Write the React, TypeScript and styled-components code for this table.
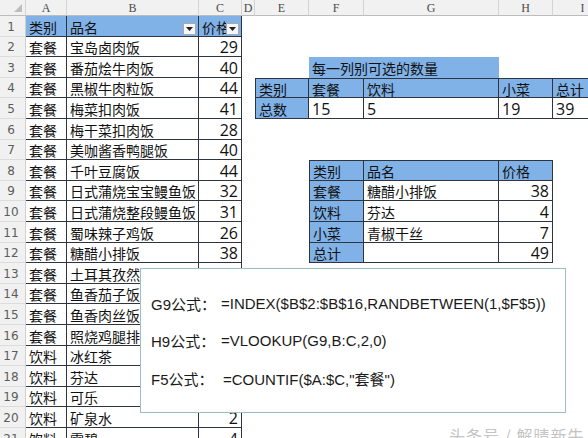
import React from 'react';
import styled, { createGlobalStyle, css } from 'styled-components';

const GlobalStyle = createGlobalStyle`
  * { box-sizing: border-box; }
  html, body { margin: 0; padding: 0; background: #ffffff; }
  body { width: 588px; height: 438px; overflow: hidden; }
`;

const COLS = [26, 41, 132, 43, 13, 54, 55, 135, 54, 60];
const PATTERN = [21, 20, 21, 20, 21];
const ROWS = [16, ...Array.from({ length: 21 }, (_, i) => PATTERN[i % 5])];
const LINE = '#2f3540';
const BLUE = '#80b2e8';

type CellSpec = {
  t?: string;
  fill?: 'blue' | 'white';
  num?: boolean;
  right?: boolean;
  top?: boolean;
  left?: boolean;
  span?: number;
  plain?: boolean;
  dd?: boolean;
};

const Frame = styled.div`
  position: relative;
  width: 588px;
  height: 438px;
  overflow: hidden;
  background: #ffffff;
  font-family: "Noto Sans CJK SC", sans-serif;
  color: #111;
`;

const Sheet = styled.div`
  display: grid;
  grid-template-columns: ${COLS.map((c) => `${c}px`).join(' ')};
  grid-template-rows: ${ROWS.map((r) => `${r}px`).join(' ')};
`;

const Corner = styled.div`
  position: relative;
  background: #f1f1f1;
  border-right: 1px solid #d4d4d4;
  border-bottom: 1px solid #bcbcbc;
  &::after {
    content: '';
    position: absolute;
    right: 3px;
    bottom: 3px;
    width: 0;
    height: 0;
    border-left: 8px solid transparent;
    border-bottom: 8px solid #bdbdbd;
  }
`;

const ColHead = styled.div`
  display: flex;
  align-items: center;
  justify-content: center;
  background: #f1f1f1;
  border-right: 1px solid #d4d4d4;
  border-bottom: 1px solid #bcbcbc;
  font-family: "Liberation Serif", serif;
  font-size: 12px;
  color: #4a4a4a;
  line-height: 1;
`;

const RowHead = styled.div`
  display: flex;
  align-items: center;
  justify-content: center;
  padding-right: 3px;
  padding-top: 1px;
  background: #f1f1f1;
  border-right: 1px solid #cfcfcf;
  border-bottom: 1px solid #dcdcdc;
  font-family: "DejaVu Sans", sans-serif;
  font-size: 12px;
  color: #5c5c5c;
  line-height: 1;
`;

const Cell = styled.div<{
  $fill?: 'blue' | 'white';
  $num?: boolean;
  $right?: boolean;
  $top?: boolean;
  $left?: boolean;
  $span?: number;
  $plain?: boolean;
}>`
  position: relative;
  display: flex;
  align-items: center;
  justify-content: ${(p) => (p.$right ? 'flex-end' : 'flex-start')};
  padding: 1px 3px 0 3px;
  white-space: nowrap;
  overflow: hidden;
  line-height: 1;
  grid-column: ${(p) => (p.$span ? `span ${p.$span}` : 'auto')};
  background: ${(p) => (p.$fill === 'blue' ? BLUE : '#ffffff')};
  font-size: ${(p) => (p.$num ? '16px' : '14px')};
  font-family: ${(p) =>
    p.$num ? '"Open Sans", "Noto Sans CJK SC", sans-serif' : '"Noto Sans CJK SC", sans-serif'};
  ${(p) =>
    p.$fill &&
    !p.$plain &&
    css`
      border-right: 1px solid ${LINE};
      border-bottom: 1px solid ${LINE};
    `}
  ${(p) => p.$top && css`border-top: 1px solid ${LINE};`}
  ${(p) => p.$left && css`border-left: 1px solid ${LINE};`}
`;

const Dropdown = styled.span`
  position: absolute;
  right: 2px;
  top: 7px;
  width: 13px;
  height: 12px;
  background: #f6f6f6;
  border: 1px solid #a9a9a9;
  display: flex;
  align-items: center;
  justify-content: center;
`;

const Popup = styled.div`
  position: absolute;
  left: 140px;
  top: 268px;
  width: 426px;
  height: 145px;
  background: #ffffff;
  border: 1px solid #9dbdc1;
  padding: 24px 10px 24px 10px;
  display: grid;
  grid-template-columns: 70px 1fr;
  grid-auto-rows: 20px;
  row-gap: 17.5px;
  align-items: center;
  font-family: "Liberation Sans", "Noto Sans CJK SC", sans-serif;
  font-size: 15px;
  color: #1a1a1a;
  white-space: nowrap;
`;

const Label = styled.span``;
const Formula = styled.span<{ $shift?: boolean }>`
  padding-left: ${(p) => (p.$shift ? '2px' : '0')};
`;

const Watermark = styled.div`
  position: absolute;
  left: 449px;
  top: 423px;
  font-family: "Noto Sans CJK SC", sans-serif;
  font-size: 16px;
  color: #c4c4c4;
  letter-spacing: 1px;
  white-space: nowrap;
`;

const E: CellSpec = {};

const items: [string, string, string][] = [
  ['套餐', '宝岛卤肉饭', '29'],
  ['套餐', '番茄烩牛肉饭', '40'],
  ['套餐', '黑椒牛肉粒饭', '44'],
  ['套餐', '梅菜扣肉饭', '41'],
  ['套餐', '梅干菜扣肉饭', '28'],
  ['套餐', '美咖酱香鸭腿饭', '40'],
  ['套餐', '千叶豆腐饭', '44'],
  ['套餐', '日式蒲烧宝宝鳗鱼饭', '32'],
  ['套餐', '日式蒲烧整段鳗鱼饭', '31'],
  ['套餐', '蜀味辣子鸡饭', '26'],
  ['套餐', '糖醋小排饭', '38'],
  ['套餐', '土耳其孜然烤肉饭', '36'],
  ['套餐', '鱼香茄子饭', '26'],
  ['套餐', '鱼香肉丝饭', '26'],
  ['套餐', '照烧鸡腿排饭', '30'],
  ['饮料', '冰红茶', '3'],
  ['饮料', '芬达', '4'],
  ['饮料', '可乐', '3'],
  ['饮料', '矿泉水', '2'],
  ['饮料', '雪碧', '4'],
];

const blue = (t: string, extra: Partial<CellSpec> = {}): CellSpec => ({ t, fill: 'blue', ...extra });
const white = (t: string, extra: Partial<CellSpec> = {}): CellSpec => ({ t, fill: 'white', ...extra });

const rightSide: Record<number, CellSpec[]> = {
  3: [E, E, blue('每一列别可选的数量', { plain: true, span: 2 }), E, E],
  4: [E, blue('类别', { top: true, left: true }), blue('套餐', { top: true }), blue('饮料', { top: true }), blue('小菜', { top: true }), blue('总计', { top: true })],
  5: [E, blue('总数', { left: true }), white('15', { num: true }), white('5', { num: true }), white('19', { num: true }), white('39', { num: true })],
  8: [E, E, blue('类别', { top: true, left: true }), blue('品名', { top: true }), blue('价格', { top: true }), E],
  9: [E, E, blue('套餐', { left: true }), white('糖醋小排饭'), white('38', { num: true, right: true }), E],
  10: [E, E, blue('饮料', { left: true }), white('芬达'), white('4', { num: true, right: true }), E],
  11: [E, E, blue('小菜', { left: true }), white('青椒干丝'), white('7', { num: true, right: true }), E],
  12: [E, E, blue('总计', { left: true }), white(''), white('49', { num: true, right: true }), E],
};

const rows: CellSpec[][] = [
  [blue('类别'), blue('品名', { dd: true }), blue('价格', { dd: true }), E, E, E, E, E, E],
  ...items.map(([c, n, p], i) => {
    const r = i + 2;
    const left: CellSpec[] = [white(c), white(n), white(p, { num: true, right: true })];
    return [...left, ...(rightSide[r] ?? [E, E, E, E, E, E])];
  }),
];

const DropArrow = () => (
  <svg width="7" height="4" viewBox="0 0 7 4">
    <path d="M0 0 H7 L3.5 4 Z" fill="#222" />
  </svg>
);

const SheetCell = ({ spec }: { spec: CellSpec }) => (
  <Cell
    $fill={spec.fill}
    $num={spec.num}
    $right={spec.right}
    $top={spec.top}
    $left={spec.left}
    $span={spec.span}
    $plain={spec.plain}
  >
    {spec.t}
    {spec.dd && (
      <Dropdown>
        <DropArrow />
      </Dropdown>
    )}
  </Cell>
);

const letters = ['A', 'B', 'C', 'D', 'E', 'F', 'G', 'H', 'I'];

export default function App() {
  return (
    <Frame>
      <GlobalStyle />
      <Sheet>
        <Corner />
        {letters.map((l) => (
          <ColHead key={l}>{l}</ColHead>
        ))}
        {rows.map((row, ri) => (
          <React.Fragment key={ri}>
            <RowHead>{ri + 1}</RowHead>
            {row.map((spec, ci) => (
              <SheetCell key={ci} spec={spec} />
            ))}
          </React.Fragment>
        ))}
      </Sheet>
      <Popup>
        <Label>G9公式：</Label>
        <Formula>=INDEX($B$2:$B$16,RANDBETWEEN(1,$F$5))</Formula>
        <Label>H9公式：</Label>
        <Formula>=VLOOKUP(G9,B:C,2,0)</Formula>
        <Label>F5公式：</Label>
        <Formula $shift>=COUNTIF($A:$C,"套餐")</Formula>
      </Popup>
      <Watermark>头条号 / 解晴新牛</Watermark>
    </Frame>
  );
}
